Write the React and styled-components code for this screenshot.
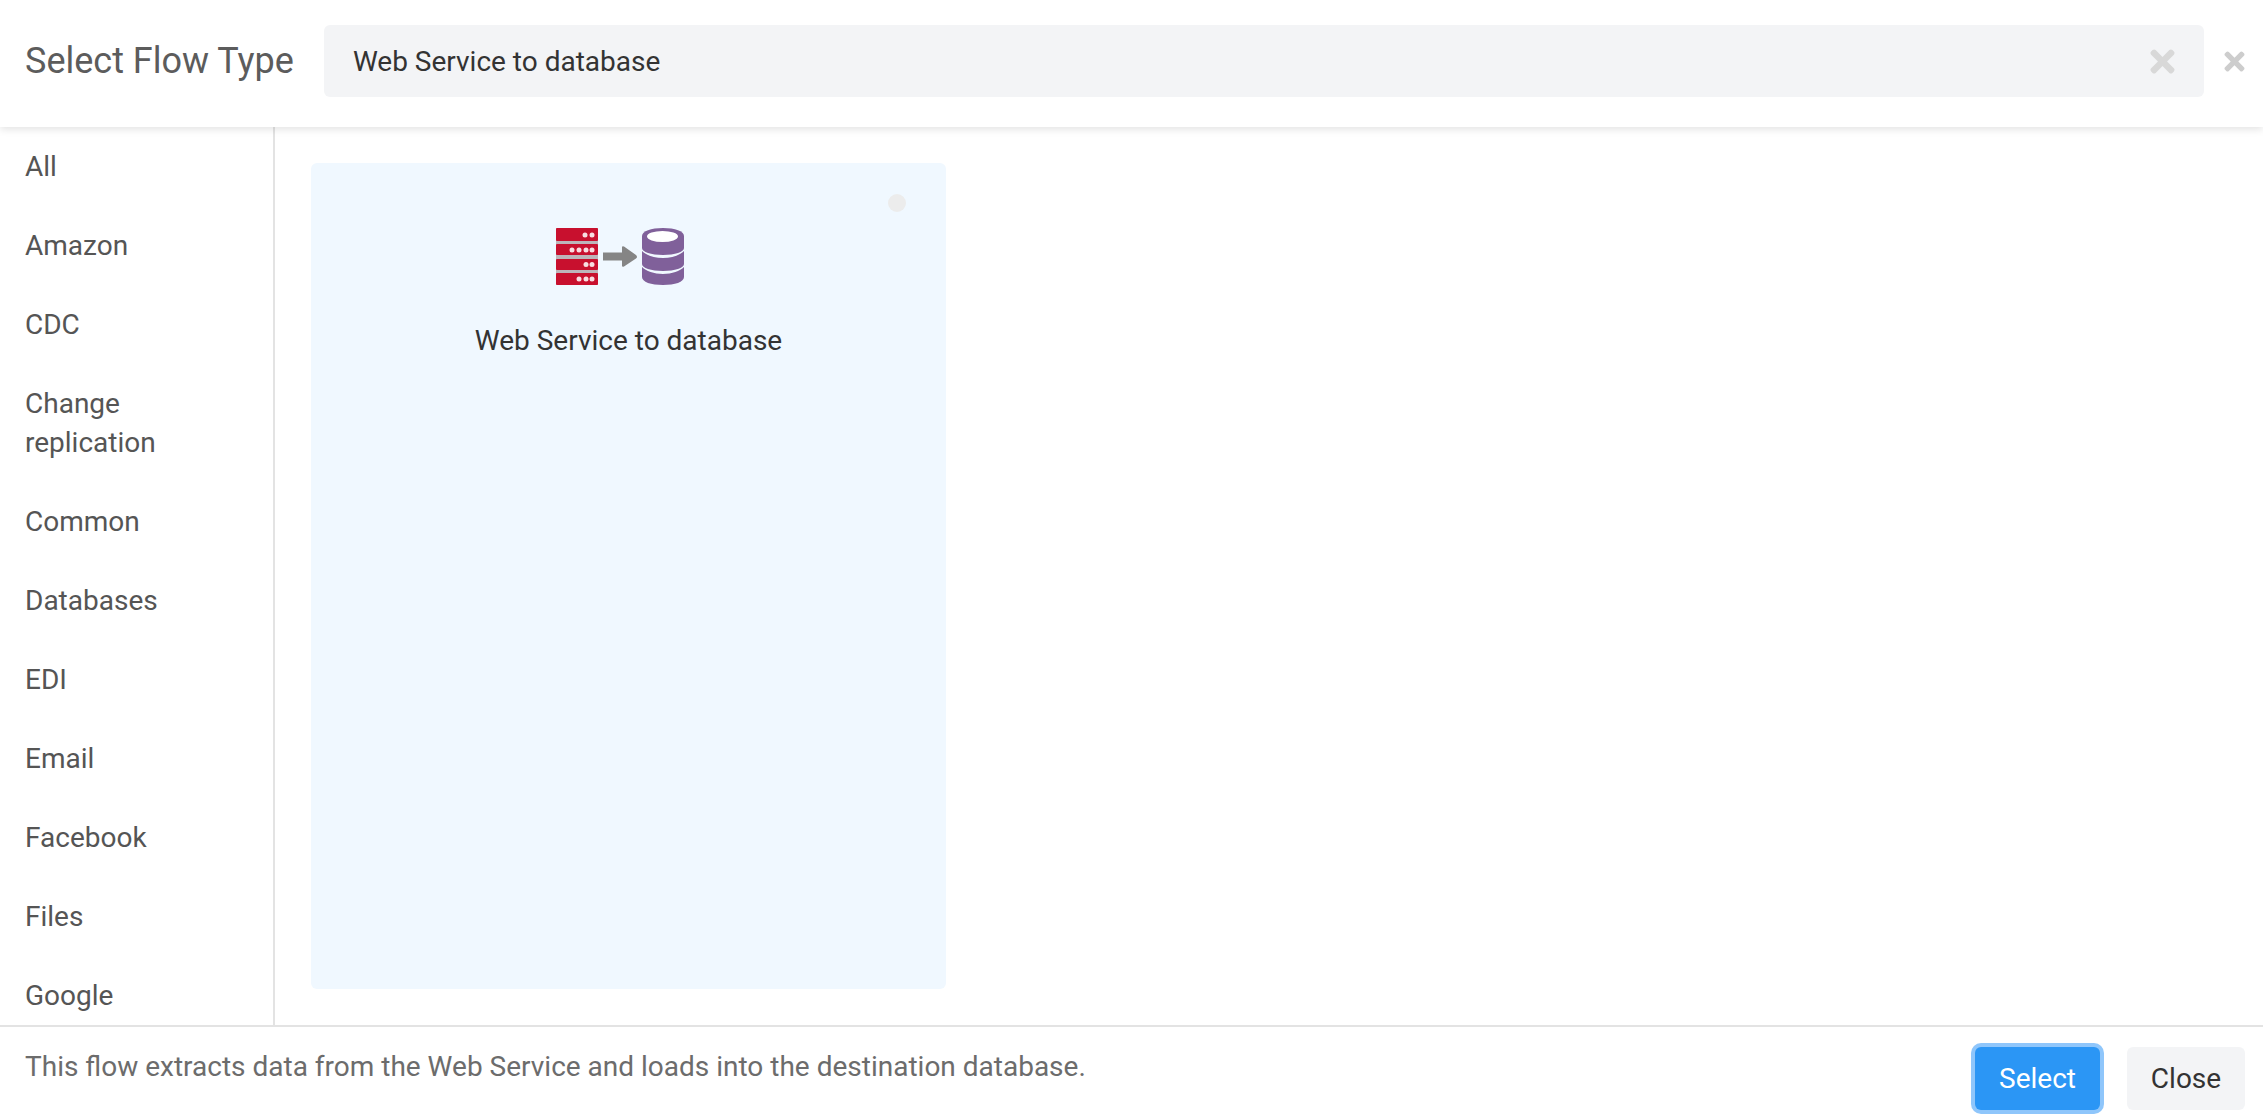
import React from 'react';
import styled, { createGlobalStyle } from 'styled-components';
import { FaTimes } from 'react-icons/fa';

const GlobalStyle = createGlobalStyle`
  html, body { margin: 0; padding: 0; height: 100%; background: #fff; }
  body { font-family: Roboto, "Liberation Sans", sans-serif; overflow: hidden; }
  #root { height: 100%; }
`;

const Dialog = styled('div')`
  display: flex;
  flex-direction: column;
  height: 1119px;
  box-sizing: border-box;
`;
const Header = styled('header')`
  position: relative;
  z-index: 2;
  display: flex;
  align-items: center;
  flex: 0 0 127px;
  box-sizing: border-box;
  padding: 0 14px 5px 25px;
  background: #fff;
  box-shadow: 0 2px 8px rgba(0, 0, 0, 0.12);
`;
const Title = styled('h1')`
  flex: 0 0 auto;
  margin: 0 30px 0 0;
  font-size: 36px;
  font-weight: 400;
  line-height: 44px;
  color: #5c5c5c;
  white-space: nowrap;
`;
const SearchBox = styled('div')`
  flex: 1;
  display: flex;
  align-items: center;
  height: 72px;
  box-sizing: border-box;
  padding: 0 24px 0 29px;
  background: #f3f4f6;
  border-radius: 6px;
`;
const SearchInput = styled('input')`
  flex: 1;
  border: none;
  outline: none;
  padding: 0;
  background: transparent;
  font-family: inherit;
  font-size: 28px;
  color: #333;
`;
const ClearIcon = styled(FaTimes)`
  font-size: 35px;
  color: #d8d8d8;
`;
const CloseIcon = styled(FaTimes)`
  margin-left: 16px;
  font-size: 29px;
  color: #cdcdcd;
`;
const Body = styled('div')`
  flex: 1;
  display: flex;
  min-height: 0;
`;
const Sidebar = styled('nav')`
  flex: 0 0 275px;
  box-sizing: border-box;
  border-right: 2px solid #e3e3e3;
  overflow: hidden;
`;
const SideItem = styled('div')`
  padding: 20px 25px;
  font-size: 28px;
  line-height: 39px;
  color: #555;
`;
const Content = styled('main')`
  flex: 1;
  padding: 36px 0 0 36px;
`;
const Card = styled('div')`
  position: relative;
  display: flex;
  flex-direction: column;
  align-items: center;
  width: 635px;
  height: 826px;
  box-sizing: border-box;
  padding-top: 65px;
  background: #f0f8ff;
  border-radius: 6px;
`;
const Radio = styled('span')`
  position: absolute;
  top: 31px;
  right: 40px;
  width: 18px;
  height: 18px;
  border-radius: 50%;
  background: #ececec;
`;
const IconSvg = styled('svg')`
  margin-right: 17px;
`;
const CardTitle = styled('div')`
  margin-top: 36px;
  font-size: 28px;
  line-height: 39px;
  color: #333;
`;
const Footer = styled('footer')`
  flex: 0 0 94px;
  display: flex;
  align-items: flex-start;
  box-sizing: border-box;
  padding: 20px 18px 0 25px;
  border-top: 2px solid #e3e3e3;
`;
const Description = styled('div')`
  flex: 1;
  font-size: 28px;
  line-height: 39px;
  color: #6c6c6c;
`;
const Button = styled('button')`
  height: 63px;
  padding: 0;
  width: ${(p) => (p.primary ? '125px' : '118px')};
  margin-left: ${(p) => (p.primary ? '0' : '27px')};
  border: none;
  border-radius: 6px;
  font-family: inherit;
  font-size: 28px;
  background: ${(p) => (p.primary ? '#2b96f5' : '#f3f4f6')};
  color: ${(p) => (p.primary ? '#fff' : '#333')};
  box-shadow: ${(p) => (p.primary ? '0 0 0 4px #8fc6fb' : 'none')};
`;

const FlowIcon = () => (
  <IconSvg width="128" height="57" viewBox="0 0 128 57">
    <rect x="0" y="0" width="42" height="57" rx="1" fill="#bdb5ba" />
    <g fill="#c8102e">
      <rect x="0" y="0" width="42" height="13" rx="1" />
      <rect x="0" y="16" width="42" height="11" rx="1" />
      <rect x="0" y="31" width="42" height="11" rx="1" />
      <rect x="0" y="45" width="42" height="12" rx="1" />
    </g>
    <g fill="#f8dde1">
      <circle cx="29" cy="7" r="2.500" />
      <circle cx="36" cy="7" r="2.500" />
      <circle cx="16" cy="22" r="2.500" />
      <circle cx="23" cy="22" r="2.500" />
      <circle cx="30" cy="22" r="2.500" />
      <circle cx="36" cy="22" r="2.500" />
      <circle cx="30" cy="36.500" r="2.500" />
      <circle cx="36" cy="36.500" r="2.500" />
      <circle cx="23" cy="51" r="2.500" />
      <circle cx="30" cy="51" r="2.500" />
      <circle cx="36" cy="51" r="2.500" />
    </g>
    <path d="M47 24.500h19v-5q0-2 2-1l12 8.500q2 2 0 3.500l-12 8q-2 1-2-1v-5H47z" fill="#858585" />
    <g fill="#80609a">
      <path d="M86 8c0-5 9-8 21-8s21 3 21 8v12c0 4-9 7-21 7s-21-3-21-7z" />
      <path d="M86 23c4 4 12 7 21 7s17-3 21-7v13c0 4-9 7-21 7s-21-3-21-7z" />
      <path d="M86 39c4 4 12 7 21 7s17-3 21-7v10c0 5-9 8-21 8s-21-3-21-8z" />
    </g>
    <ellipse cx="106.500" cy="8.500" rx="15.500" ry="5.500" fill="#fff" />
  </IconSvg>
);

const categories = ['All', 'Amazon', 'CDC', 'Change replication', 'Common', 'Databases', 'EDI', 'Email', 'Facebook', 'Files', 'Google'];

const App = () => (
  <Dialog>
    <GlobalStyle />
    <Header>
      <Title>Select Flow Type</Title>
      <SearchBox>
        <SearchInput defaultValue="Web Service to database" />
        <ClearIcon />
      </SearchBox>
      <CloseIcon />
    </Header>
    <Body>
      <Sidebar>
        {categories.map((c) => <SideItem key={c}>{c}</SideItem>)}
      </Sidebar>
      <Content>
        <Card>
          <Radio />
          <FlowIcon />
          <CardTitle>Web Service to database</CardTitle>
        </Card>
      </Content>
    </Body>
    <Footer>
      <Description>This flow extracts data from the Web Service and loads into the destination database.</Description>
      <Button primary>Select</Button>
      <Button>Close</Button>
    </Footer>
  </Dialog>
);

export default App;
